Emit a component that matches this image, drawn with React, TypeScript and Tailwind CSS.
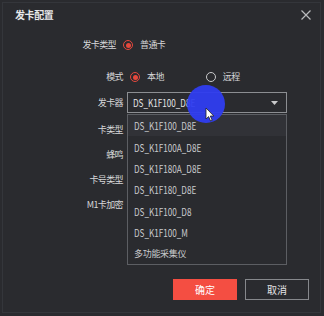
import React from "react";

const font = { fontFamily: '"Noto Sans CJK SC", "Noto Sans", sans-serif' };

function Radio({ checked }: { checked: boolean }) {
  return (
    <span
      className={`flex h-[10px] w-[10px] items-center justify-center rounded-full border ${
        checked ? "border-[#e5483d]" : "border-[#c9cacc]"
      }`}
    >
      {checked && <span className="h-[5px] w-[5px] rounded-full bg-[#e5483d]" />}
    </span>
  );
}

const items = [
  "DS_K1F100_D8E",
  "DS_K1F100A_D8E",
  "DS_K1F180A_D8E",
  "DS_K1F180_D8E",
  "DS_K1F100_D8",
  "DS_K1F100_M",
];

export default function App() {
  return (
    <div
      className="relative h-[316px] w-[324px] overflow-hidden bg-[#2a2b2f] text-[9px] text-[#d6d7d9]"
      style={font}
    >
      <div className="absolute inset-[2px] bottom-[3px] right-[3px] border border-[#34363b]" />
      <div className="relative flex h-[28px] items-center justify-between pl-[15px] pr-[10px] pt-[1px]">
        <span className="text-[10px] font-bold tracking-[-0.4px] text-[#e8e8ea]">发卡配置</span>
        <svg width="12" height="12" viewBox="0 0 12 12" className="mr-[2px]">
          <path d="M1.5 1.5 L10.5 10.5 M10.5 1.5 L1.5 10.5" stroke="#b9babd" strokeWidth="1.2" />
        </svg>
      </div>

      <div className="relative flex flex-col tracking-[-0.6px]">
        <div className="mt-[9px] flex h-[16px] items-center">
          <span className="w-[116px] text-right">发卡类型</span>
          <span className="ml-[7px]"><Radio checked /></span>
          <span className="ml-[7px]">普通卡</span>
        </div>
        <div className="mt-[16px] flex h-[16px] items-center">
          <span className="w-[123px] text-right">模式</span>
          <span className="ml-[7px]"><Radio checked /></span>
          <span className="ml-[7px]">本地</span>
          <span className="ml-[42px]"><Radio checked={false} /></span>
          <span className="ml-[7px]">远程</span>
        </div>
        <div className="mt-[7px] flex h-[21px] items-center">
          <span className="w-[123px] text-right">发卡器</span>
          <div className="ml-[4px] flex h-[21px] w-[160px] items-center justify-between border border-[#8c8e92] bg-[#2a2b2f] pl-[5px] pr-[8px] text-[11px] tracking-normal text-[#e4e4e6]">
            <span className="inline-block origin-left scale-x-[0.74]">DS_K1F100_D8E</span>
            <svg width="7" height="4" viewBox="0 0 7 4"><path d="M0 0 H7 L3.5 4 Z" fill="#c9cacc" /></svg>
          </div>
        </div>
        {["卡类型", "蜂鸣", "卡号类型", "M1卡加密"].map((l) => (
          <div key={l} className="mt-[9px] flex h-[16px] items-center">
            <span className="w-[123px] text-right">{l}</span>
          </div>
        ))}
        <div className="mt-[66px] flex justify-end gap-[8px] pr-[15px] tracking-normal">
          <button className="flex h-[21px] w-[64px] items-center justify-center bg-[#f44e42] text-[10px] text-white">确定</button>
          <button className="flex h-[21px] w-[64px] items-center justify-center border border-[#86888c] text-[10px] text-[#e4e4e6]">取消</button>
        </div>
      </div>

      <div className="absolute left-[127px] top-[114px] w-[160px] border border-[#5c5e63] bg-[#2a2b2f] text-[11px] text-[#c9cacd]">
        {items.map((t, i) => (
          <div
            key={t}
            className={`flex h-[21.3px] items-center pl-[6px] ${i === 0 ? "bg-[#313237]" : ""}`}
          >
            <span className="inline-block origin-left scale-x-[0.74]">{t}</span>
          </div>
        ))}
        <div className="flex h-[21.3px] items-center pl-[6px] text-[9px] tracking-[-0.3px]">多功能采集仪</div>
      </div>

      <div className="absolute left-[187px] top-[85px] h-[38px] w-[38px] rounded-full bg-[#2f3df0] opacity-95" />
      <svg className="absolute left-[205px] top-[107px]" width="10" height="15" viewBox="0 0 10 15">
        <path d="M1 1 L1 12 L3.6 9.6 L5.6 14 L7.2 13.3 L5.3 9 L8.8 9 Z" fill="#ffffff" stroke="#222" strokeWidth="0.8" />
      </svg>
    </div>
  );
}
